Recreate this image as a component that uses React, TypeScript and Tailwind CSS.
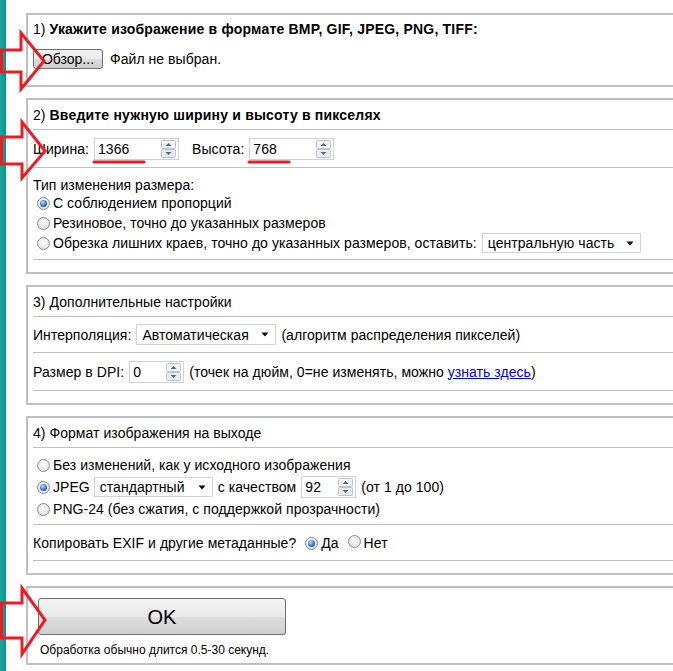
import React from "react";

function Radio({ checked }: { checked?: boolean }) {
  return (
    <span className="inline-flex items-center justify-center w-[13px] h-[13px] shrink-0 rounded-full border border-[#8c8c8c] bg-[radial-gradient(circle_at_50%_40%,#ffffff,#d6d6d6)]">
      {checked && (
        <span className="w-[7px] h-[7px] rounded-full bg-[radial-gradient(circle_at_40%_35%,#b8dcff,#2e78cf_55%,#123e84)]" />
      )}
    </span>
  );
}

function Spinner() {
  return (
    <svg width="15" height="18" viewBox="0 0 15 18" className="shrink-0">
      <rect x="0.5" y="0.5" width="14" height="8" rx="1" fill="#f1f2f5" stroke="#bcc3ce" />
      <rect x="0.5" y="9.5" width="14" height="8" rx="1" fill="#e9ebef" stroke="#bcc3ce" />
      <path d="M4.5 6 L7.5 3 L10.5 6Z" fill="#56657f" />
      <path d="M4.5 12 L7.5 15 L10.5 12Z" fill="#56657f" />
    </svg>
  );
}

function Caret() {
  return (
    <svg width="8" height="5" viewBox="0 0 8 5" className="shrink-0">
      <path d="M0.5 0.5 H7.5 L4 4.5Z" fill="#000" />
    </svg>
  );
}

export default function App() {
  return (
    <div className="relative w-[673px] h-[671px] overflow-hidden bg-white flex font-['Liberation_Sans',Arial,sans-serif] text-[14px] tracking-[0.05px] text-black leading-none">
      {/* teal side bar */}
      <div className="w-[6px] shrink-0 bg-[linear-gradient(to_right,#1ba69f,#0f918a)]" />

      <div className="pl-[20px] pt-[13px] flex flex-col gap-[11px]">
        {/* 1) file */}
        <div className="w-[660px] shrink-0 border-2 border-[#c0c0c0]">
          <div className="ml-[5px]">
            <div className="h-[28px] flex items-center">
              <span>1)&nbsp;</span>
              <b className="tracking-[0.2px]">Укажите изображение в формате BMP, GIF, JPEG, PNG, TIFF:</b>
            </div>
            <div className="mt-[6px] h-[20px] flex items-center">
              <div className="w-[70px] h-[20px] flex items-center justify-center rounded-[3px] border border-[#707070] bg-[linear-gradient(#f2f2f2_0%,#ebebeb_50%,#dddddd_51%,#cfcfcf_100%)] tracking-normal">
                Обзор...
              </div>
              <span className="ml-[7px]">Файл не выбран.</span>
            </div>
            <div className="h-[16px]" />
          </div>
        </div>

        {/* 2) size */}
        <div className="w-[660px] shrink-0 border-2 border-[#c0c0c0]">
          <div className="ml-[5px]">
            <div className="h-[30px] flex items-center border-b border-[#c0c0c0]">
              <span>2)&nbsp;</span>
              <b className="tracking-[0.2px]">Введите нужную ширину и высоту в пикселях</b>
            </div>
            <div className="h-[38px] flex items-center border-b border-[#c0c0c0]">
              <span>Ширина:</span>
              <div className="ml-[5px] w-[85px] h-[22px] flex items-center justify-between border border-[#cfd2d8] pl-[3px] pr-[2px]">
                <span>1366</span>
                <Spinner />
              </div>
              <span className="ml-[13px]">Высота:</span>
              <div className="ml-[5px] w-[85px] h-[22px] flex items-center justify-between border border-[#cfd2d8] pl-[3px] pr-[2px]">
                <span>768</span>
                <Spinner />
              </div>
            </div>
            <div className="h-[92px] pt-[8px] border-b border-[#c0c0c0]">
              <div className="h-[17px] flex items-center">Тип изменения размера:</div>
              <div className="h-[20px] flex items-center pl-[4px] gap-[3px]">
                <Radio checked />
                <span>С соблюдением пропорций</span>
              </div>
              <div className="h-[20px] flex items-center pl-[4px] gap-[3px]">
                <Radio />
                <span>Резиновое, точно до указанных размеров</span>
              </div>
              <div className="h-[20px] flex items-center pl-[4px] gap-[3px]">
                <Radio />
                <span>Обрезка лишних краев, точно до указанных размеров, оставить:</span>
                <div className="ml-[2px] w-[159px] h-[20px] flex items-center justify-between border border-[#d4d4d4] pl-[5px] pr-[6px]">
                  <span>центральную часть</span>
                  <Caret />
                </div>
              </div>
            </div>
            <div className="h-[12px]" />
          </div>
        </div>

        {/* 3) extra */}
        <div className="w-[660px] shrink-0 border-2 border-[#c0c0c0]">
          <div className="ml-[5px]">
            <div className="h-[30px] flex items-center border-b border-[#c0c0c0]">
              3) Дополнительные настройки
            </div>
            <div className="h-[36px] flex items-center border-b border-[#c0c0c0]">
              <span>Интерполяция:</span>
              <div className="ml-[5px] w-[140px] h-[21px] flex items-center justify-between border border-[#d4d4d4] pl-[5px] pr-[6px]">
                <span>Автоматическая</span>
                <Caret />
              </div>
              <span className="ml-[5px]">(алгоритм распределения пикселей)</span>
            </div>
            <div className="h-[38px] flex items-center border-b border-[#c0c0c0]">
              <span>Размер в DPI:</span>
              <div className="ml-[5px] w-[55px] h-[22px] flex items-center justify-between border border-[#cfd2d8] pl-[3px] pr-[2px]">
                <span>0</span>
                <Spinner />
              </div>
              <span className="ml-[5px] whitespace-pre">
                (точек на дюйм, 0=не изменять, можно{" "}
                <a className="text-[#0000ee] underline">узнать здесь</a>)
              </span>
            </div>
            <div className="h-[12px]" />
          </div>
        </div>

        {/* 4) output format */}
        <div className="w-[660px] shrink-0 border-2 border-[#c0c0c0]">
          <div className="ml-[5px]">
            <div className="h-[30px] flex items-center border-b border-[#c0c0c0]">
              4) Формат изображения на выходе
            </div>
            <div className="h-[77px] pt-[6px] border-b border-[#c0c0c0]">
              <div className="h-[22px] flex items-center pl-[4px] gap-[3px]">
                <Radio />
                <span>Без изменений, как у исходного изображения</span>
              </div>
              <div className="h-[22px] flex items-center pl-[4px] gap-[3px]">
                <Radio checked />
                <span>JPEG</span>
                <div className="ml-[1px] w-[119px] h-[20px] flex items-center justify-between border border-[#d4d4d4] pl-[5px] pr-[6px]">
                  <span>стандартный</span>
                  <Caret />
                </div>
                <span className="ml-[2px]">с качеством</span>
                <div className="ml-[2px] w-[55px] h-[22px] flex items-center justify-between border border-[#cfd2d8] pl-[3px] pr-[2px]">
                  <span>92</span>
                  <Spinner />
                </div>
                <span className="ml-[2px]">(от 1 до 100)</span>
              </div>
              <div className="h-[22px] flex items-center pl-[4px] gap-[3px]">
                <Radio />
                <span>PNG-24 (без сжатия, с поддержкой прозрачности)</span>
              </div>
            </div>
            <div className="h-[36px] flex items-center border-b border-[#c0c0c0]">
              <span>Копировать EXIF и другие метаданные?</span>
              <span className="ml-[9px]">
                <Radio checked />
              </span>
              <span className="ml-[3px]">Да</span>
              <span className="ml-[9px]">
                <Radio />
              </span>
              <span className="ml-[3px]">Нет</span>
            </div>
            <div className="h-[12px]" />
          </div>
        </div>

        {/* OK */}
        <div className="w-[660px] shrink-0 border-2 border-[#c0c0c0]">
          <div className="pt-[10px] pl-[10px]">
            <div className="w-[248px] h-[37px] flex items-center justify-center rounded-[3px] border border-[#707070] bg-[linear-gradient(#f2f2f2_0%,#ebebeb_50%,#dddddd_51%,#cfcfcf_100%)] text-[20px] tracking-normal">
              OK
            </div>
            <div className="mt-[6px] h-[18px] flex items-center pl-[2px] text-[12px] tracking-normal">
              Обработка обычно длится 0.5-30 секунд.
            </div>
            <div className="h-[4px]" />
          </div>
        </div>
      </div>

      {/* red annotation marks */}
      <svg
        className="absolute left-0 top-0 pointer-events-none"
        width="673"
        height="671"
        viewBox="0 0 673 671"
      >
        <g fill="none" stroke="#ec1c24" strokeWidth="3" strokeLinejoin="miter">
          <path d="M1.5 50 H21 V33 L44 61 L21 89 V72 H1.5 Z" />
          <path d="M1.5 137 H22 V122 L45 151 L22 178 V164 H1.5 Z" />
          <path d="M1.5 603 H22 V588 L45 620 L22 654 V638 H1.5 Z" />
        </g>
        <g stroke="#ec1c24" strokeWidth="3" strokeLinecap="round">
          <line x1="94" y1="162" x2="144" y2="162" />
          <line x1="249" y1="162" x2="289" y2="162" />
        </g>
      </svg>
    </div>
  );
}
